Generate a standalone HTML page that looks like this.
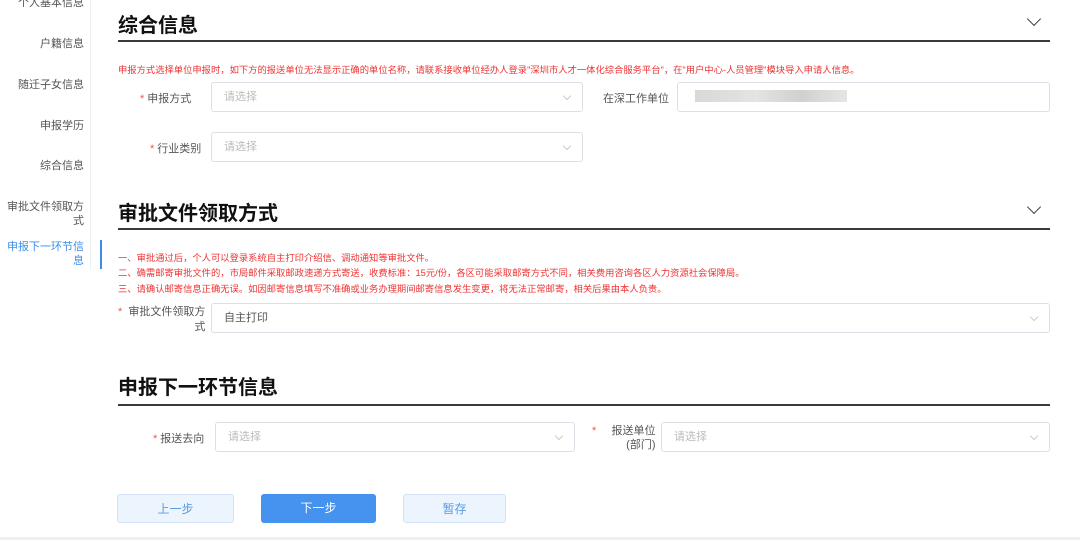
<!DOCTYPE html>
<html><head><meta charset="utf-8"><style>
*{margin:0;padding:0;box-sizing:border-box}
body{width:1080px;height:540px;overflow:hidden;background:#fff;position:relative;font-family:"Liberation Sans","Noto Sans CJK SC",sans-serif;color:#333}
.a{position:absolute;white-space:nowrap}
.side{font-size:11px;color:#555;text-align:right;right:996px;line-height:14px}
.t{font-size:20px;font-weight:bold;color:#111;left:118px}
.ln{position:absolute;left:118px;width:932px;height:2px;background:#3a3a3a}
.red{font-size:9.3px;color:#e33;left:118px}
.inp{position:absolute;border:1px solid #dcdfe6;border-radius:3px;height:30px;font-size:11px;color:#bbb;padding:0 0 0 12px;line-height:28px}
.inp.s::after{content:"";position:absolute;right:12px;top:10px;width:5px;height:5px;border-right:1px solid #ccc;border-bottom:1px solid #ccc;transform:rotate(45deg)}
.lb{font-size:11px;color:#555;text-align:right}
.st{color:#e55;margin-right:3px}
.chev{position:absolute;width:10px;height:10px;border-right:1.5px solid #444;border-bottom:1.5px solid #444;transform:rotate(45deg)}
.btn{position:absolute;top:494px;height:29px;border-radius:3px;font-size:12px;text-align:center;line-height:28px}
</style></head><body>
<div class="a side" style="top:-4px">个人基本信息</div>
<div class="a side" style="top:37px">户籍信息</div>
<div class="a side" style="top:78px">随迁子女信息</div>
<div class="a side" style="top:119px">申报学历</div>
<div class="a side" style="top:159px">综合信息</div>
<div class="a side" style="top:200px">审批文件领取方<br>式</div>
<div class="a side" style="top:240px;color:#3d8ee8">申报下一环节信<br>息</div>
<div class="a" style="left:90px;top:0;width:1px;height:270px;background:#f0f0f0"></div>
<div class="a" style="left:100px;top:240px;width:2px;height:29px;background:#3d8ee8"></div>

<div class="a t" style="top:9px">综合信息</div>
<div class="chev" style="left:1029px;top:14px"></div>
<div class="ln" style="top:40px"></div>
<div class="a red" style="top:62px">申报方式选择单位申报时，如下方的报送单位无法显示正确的单位名称，请联系接收单位经办人登录"深圳市人才一体化综合服务平台"，在"用户中心-人员管理"模块导入申请人信息。</div>
<div class="a lb" style="left:140px;top:90px"><span class="st">*</span>申报方式</div>
<div class="inp s" style="left:211px;top:82px;width:372px">请选择</div>
<div class="a lb" style="left:603px;top:90px">在深工作单位</div>
<div class="inp" style="left:677px;top:82px;width:373px"><div class="a" style="left:17px;top:7px;width:152px;height:12px;background:linear-gradient(90deg,#d8d8d8 0,#e4e4e4 40%,#d0d0d0 70%,#e6e6e6 100%)"></div></div>
<div class="a lb" style="left:150px;top:140px"><span class="st">*</span>行业类别</div>
<div class="inp s" style="left:211px;top:132px;width:372px">请选择</div>

<div class="a t" style="top:197px">审批文件领取方式</div>
<div class="chev" style="left:1029px;top:202px"></div>
<div class="ln" style="top:228px"></div>
<div class="a red" style="top:250px">一、审批通过后，个人可以登录系统自主打印介绍信、调动通知等审批文件。</div>
<div class="a red" style="top:265px">二、确需邮寄审批文件的，市局邮件采取邮政速递方式寄送，收费标准：15元/份，各区可能采取邮寄方式不同，相关费用咨询各区人力资源社会保障局。</div>
<div class="a red" style="top:281px">三、请确认邮寄信息正确无误。如因邮寄信息填写不准确或业务办理期间邮寄信息发生变更，将无法正常邮寄，相关后果由本人负责。</div>
<div class="a lb" style="left:118px;top:305px;line-height:15px"><span class="st">*</span> 审批文件领取方<br>式</div>
<div class="inp s" style="left:211px;top:303px;width:839px;color:#555">自主打印</div>

<div class="a t" style="top:371px">申报下一环节信息</div>
<div class="ln" style="top:404px"></div>
<div class="a lb" style="left:153px;top:430px"><span class="st">*</span>报送去向</div>
<div class="inp s" style="left:215px;top:422px;width:360px">请选择</div>
<div class="a lb" style="left:592px;top:424px;line-height:14px"><span class="st">*</span>&nbsp;&nbsp;&nbsp;&nbsp;报送单位<br>&nbsp;&nbsp;&nbsp;&nbsp;&nbsp;&nbsp;&nbsp;&nbsp;&nbsp;(部门)</div>
<div class="inp s" style="left:661px;top:422px;width:389px">请选择</div>

<div class="btn" style="left:117px;width:117px;background:#ecf4fd;border:1px solid #d3e3f5;color:#5a9be5">上一步</div>
<div class="btn" style="left:261px;width:115px;background:#4593ee;color:#fff">下一步</div>
<div class="btn" style="left:403px;width:103px;background:#ecf4fd;border:1px solid #d3e3f5;color:#5a9be5">暂存</div>
<div class="a" style="left:0;top:537px;width:1080px;height:3px;background:#f0f0f0"></div>
</body></html>
